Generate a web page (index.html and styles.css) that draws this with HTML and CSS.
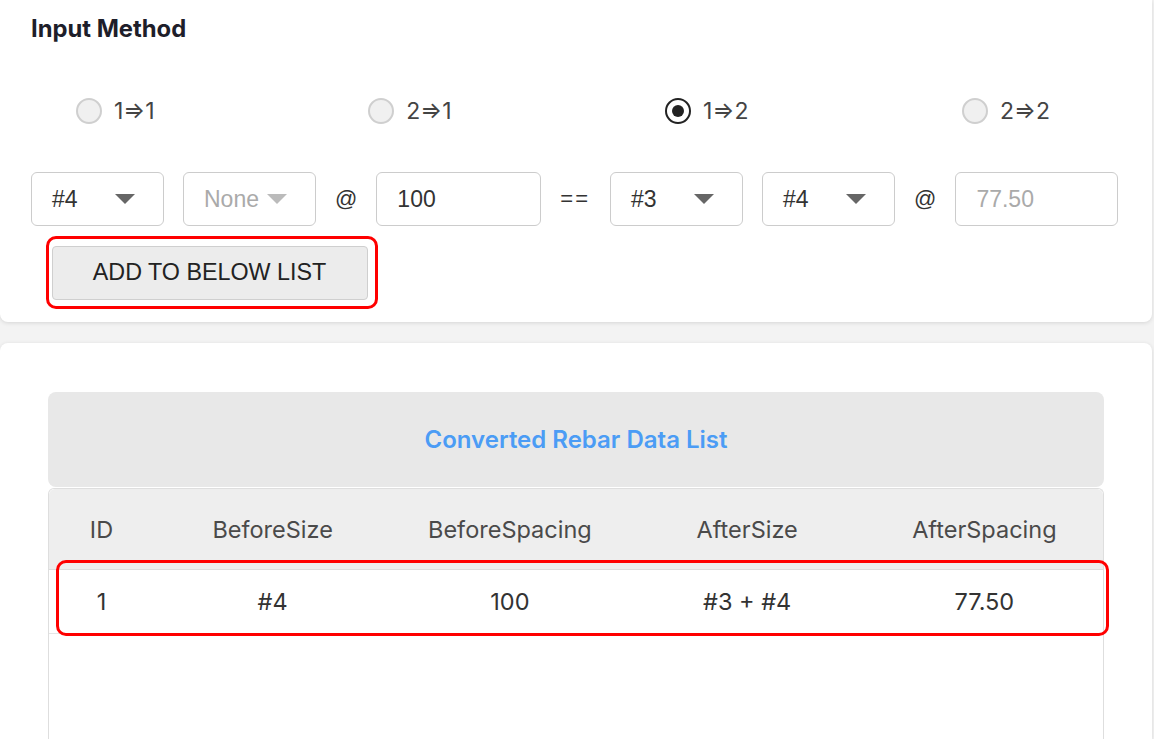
FILE: index.html
```html
<!DOCTYPE html>
<html>
<head>
<meta charset="utf-8">
<link rel="stylesheet" href="styles.css">
</head>
<body>
<div class="page">
  <section class="card card-top">
    <h2 class="title">Input Method</h2>
    <div class="radios">
      <label class="radio"><span class="dot"></span><span class="rlabel">1⇒1</span></label>
      <label class="radio"><span class="dot"></span><span class="rlabel">2⇒1</span></label>
      <label class="radio"><span class="dot checked"></span><span class="rlabel">1⇒2</span></label>
      <label class="radio"><span class="dot"></span><span class="rlabel">2⇒2</span></label>
    </div>
    <div class="inputs">
      <div class="select"><span>#4</span><span class="caret"></span></div>
      <div class="select disabled"><span>None</span><span class="caret"></span></div>
      <span class="sym">@</span>
      <input class="field" type="text" value="100">
      <span class="sym eq">==</span>
      <div class="select"><span>#3</span><span class="caret"></span></div>
      <div class="select"><span>#4</span><span class="caret"></span></div>
      <span class="sym">@</span>
      <input class="field field-last" type="text" placeholder="77.50" readonly>
    </div>
    <div class="mark-btn">
      <button class="add-btn">ADD TO BELOW LIST</button>
    </div>
  </section>

  <section class="card card-list">
    <div class="list-head">Converted Rebar Data List</div>
    <div class="table">
      <div class="row head">
        <div class="cell">ID</div>
        <div class="cell">BeforeSize</div>
        <div class="cell">BeforeSpacing</div>
        <div class="cell">AfterSize</div>
        <div class="cell">AfterSpacing</div>
      </div>
      <div class="row data">
        <div class="cell">1</div>
        <div class="cell">#4</div>
        <div class="cell">100</div>
        <div class="cell">#3 + #4</div>
        <div class="cell">77.50</div>
      </div>
      <div class="row-mark"></div>
    </div>
  </section>
</div>
</body>
</html>
```

FILE: styles.css
```css
* { box-sizing: border-box; }
html, body {
  margin: 0;
  padding: 0;
  background: #f3f3f3;
  overflow: hidden;
}
body {
  font-family: "Inter", "Noto Sans", sans-serif;
  color: #333;
  width: 1154px;
  height: 739px;
}
.page {
  display: flex;
  flex-direction: column;
  gap: 21px;
}
.card {
  background: #fff;
  width: 1152px;
  box-shadow: 0 1px 4px rgba(0, 0, 0, 0.12);
}
.card-top {
  border-radius: 0 0 8px 8px;
  padding: 14px 0 12px 31px;
  height: 322px;
}
.title {
  margin: 0;
  font-size: 23.8px;
  line-height: 30px;
  font-weight: 700;
  color: #1e1e2a;
}
.radios {
  margin: 52px 0 0 45px;
  width: 974px;
  height: 30px;
  display: flex;
  justify-content: space-between;
  align-items: center;
}
.radio {
  display: flex;
  align-items: center;
  gap: 12px;
  font-size: 23px;
  color: #444;
}
.dot {
  width: 26px;
  height: 26px;
  border-radius: 50%;
  border: 2px solid #cfcfcf;
  background: #f0f0f0;
  display: flex;
  align-items: center;
  justify-content: center;
}
.dot.checked {
  border: 2px solid #222;
  background: #fff;
}
.dot.checked::after {
  content: "";
  width: 12px;
  height: 12px;
  border-radius: 50%;
  background: #222;
}
.rlabel { line-height: 30px; }
.inputs {
  margin-top: 46px;
  display: flex;
  align-items: center;
  gap: 19px;
  height: 54px;
}
.select {
  width: 133px;
  height: 54px;
  border: 1px solid #cccccc;
  border-radius: 6px;
  display: flex;
  align-items: center;
  justify-content: space-between;
  padding: 0 28px 0 20px;
  font-family: "Liberation Sans", Arial, sans-serif;
  font-size: 23px;
  color: #333;
}
.caret {
  width: 0;
  height: 0;
  border-left: 10px solid transparent;
  border-right: 10px solid transparent;
  border-top: 10px solid #666;
}
.select.disabled {
  color: #aaa;
  padding: 0 28px 0 20px;
}
.select.disabled .caret { border-top-color: #bbb; }
.sym {
  font-family: "Liberation Sans", Arial, sans-serif;
  font-size: 22px;
  color: #333;
}
.sym.eq { letter-spacing: 2px; padding-right: 1px; }
.field {
  width: 165px;
  height: 54px;
  border: 1px solid #cccccc;
  border-radius: 6px;
  padding: 0 20px;
  font-family: "Liberation Sans", Arial, sans-serif;
  font-size: 23px;
  color: #333;
  background: #fff;
  outline: none;
}
.field-last { width: 163px; }
.field::placeholder { color: #aaa; }
.mark-btn {
  margin: 10px 0 0 15px;
  width: 332px;
  border: 3.5px solid #ff0000;
  border-radius: 10px;
  padding: 6.5px 6.5px 6.5px 2.5px;
}
.add-btn {
  width: 316px;
  height: 54px;
  background: #ececec;
  border: 1px solid #cfcfcf;
  border-radius: 4px;
  font-family: "Liberation Sans", Arial, sans-serif;
  font-size: 23.3px;
  color: #222;
  padding: 0;
}
.card-list {
  border-radius: 8px 8px 0 0;
  padding: 49px 48px 0 48px;
  height: 396px;
}
.list-head {
  height: 95px;
  background: #e8e8e8;
  border-radius: 8px;
  display: flex;
  align-items: center;
  justify-content: center;
  color: #4b9cf5;
  font-size: 24px;
  font-weight: 600;
}
.table {
  position: relative;
  margin-top: 1px;
  border: 1px solid #dedede;
  border-bottom: none;
  border-radius: 6px 6px 0 0;
  height: 251px;
  background: #fff;
}
.row {
  display: grid;
  grid-template-columns: 105px repeat(4, 1fr);
  align-items: center;
  font-size: 23.5px;
  color: #4a4a4a;
}
.row.head {
  height: 80px;
  background: #eeeeee;
  border-radius: 6px 6px 0 0;
}
.row.data {
  height: 65px;
  border-top: 1px solid #dddddd;
  border-bottom: 1px solid #e6e6e6;
  color: #333;
}
.cell { text-align: center; }
.row-mark {
  position: absolute;
  left: 7px;
  top: 71px;
  width: 1053px;
  height: 76px;
  border: 3.5px solid #ff0000;
  border-radius: 10px;
}
```
